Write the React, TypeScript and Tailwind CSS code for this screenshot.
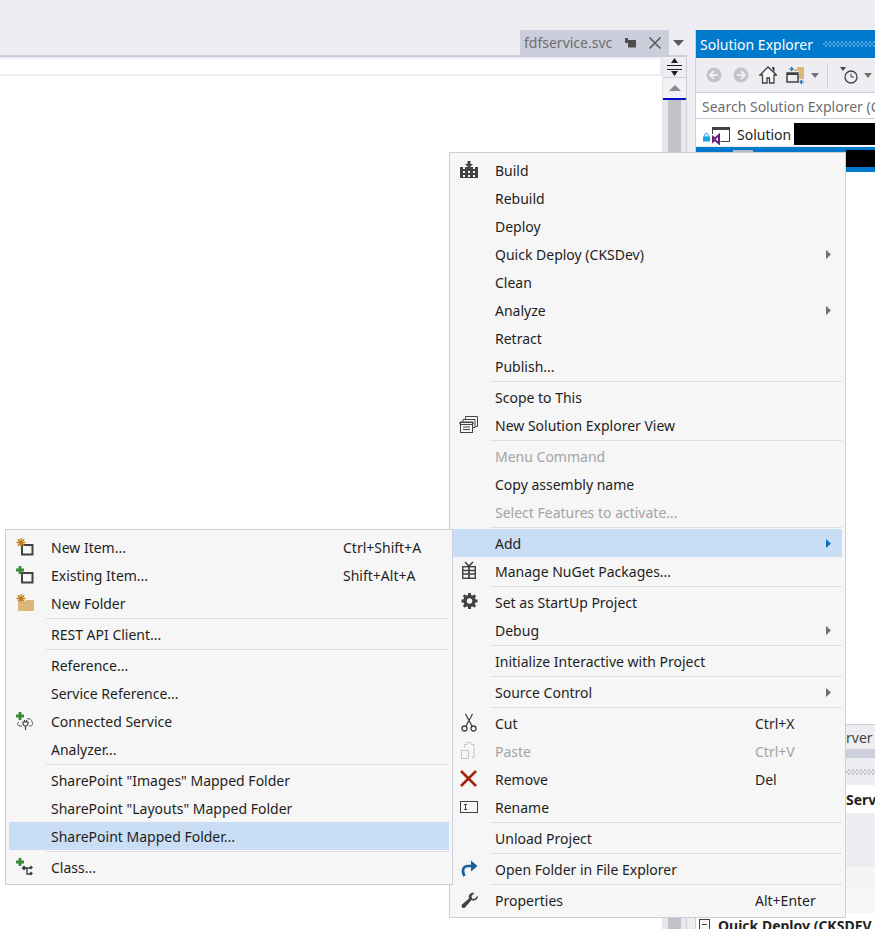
import React from 'react';

type Item = {
  label?: string;
  sep?: boolean;
  icon?: React.ReactNode;
  shortcut?: string;
  arrow?: boolean;
  disabled?: boolean;
  active?: boolean;
};

const Svg = ({ children, w = 20, h = 20 }: { children: React.ReactNode; w?: number; h?: number }) => (
  <svg width={w} height={h} viewBox={`0 0 ${w} ${h}`} fill="none">
    {children}
  </svg>
);

const NewStar = () => (
  <path d="M6 1v9M1.500 5.500h9M2.800 2.300l6.400 6.400M9.200 2.300l-6.400 6.400" stroke="#c27d1a" strokeWidth="1.300" />
);
const GreenPlus = () => <path d="M5 1v8M1 5h8" stroke="#388a34" strokeWidth="2.800" />;

const BoxIcon = ({ green }: { green?: boolean }) => (
  <Svg>
    <rect x="7" y="8" width="10.500" height="9.500" stroke="#424242" strokeWidth="2" />
    {green ? <GreenPlus /> : <NewStar />}
  </Svg>
);
const FolderIcon = () => (
  <Svg>
    <path d="M3 10l1-1h5l1.500-2H19v11H3z" fill="#dcb67a" />
    <NewStar />
  </Svg>
);
const ConnectedIcon = () => (
  <Svg>
    <path d="M4 11c-2 1-2 4 1 4h2M12 8c3-1 5 1 5 3 1 1 1 4-2 4h-1" stroke="#555" strokeWidth="1" />
    <path d="M8 11h5v2l-1.500 2h-2L8 13zM10.500 15v4M9.500 9v2M11.500 9v2" stroke="#424242" strokeWidth="1.200" />
    <GreenPlus />
  </Svg>
);
const ClassIcon = () => (
  <Svg>
    <path d="M9 11h7M12 11v6h4" stroke="#424242" strokeWidth="1.400" />
    <path d="M9 8.500l2.500 2.500L9 13.500 6.500 11zM16 8.500l2 2-2 2-2-2zM16 14.500l2 2-2 2-2-2z" fill="#424242" />
    <GreenPlus />
  </Svg>
);
const BuildIcon = () => (
  <Svg>
    <path d="M1 7h3v2h2V7h8v2h2V7h3v11H1z" fill="#424242" />
    <path d="M4 11h2v2H4zM9 11h2v2H9zM14 11h2v2h-2zM4 15h2v2H4zM9 15h2v2H9zM14 15h2v2h-2z" fill="#f6f6f6" />
    <path d="M8.500 1h3v3H14l-4 4-4-4h2.500z" fill="#424242" />
  </Svg>
);
const NewViewIcon = () => (
  <Svg>
    <path d="M6.500 4.500V1.500h12v10h-2" stroke="#424242" />
    <path d="M4 6.500V4.500h12v8h-2" stroke="#424242" />
    <rect x="1.500" y="7.500" width="12" height="10" fill="#f6f6f6" stroke="#424242" />
    <path d="M1 7h13v2.500H1zM4 12h7M4 14.500h7" stroke="#424242" />
  </Svg>
);
const GiftIcon = () => (
  <Svg>
    <path d="M6 1l4 4 4-4" stroke="#424242" strokeWidth="1.600" />
    <rect x="3.700" y="5.700" width="12.600" height="11.600" stroke="#424242" strokeWidth="1.400" />
    <path d="M3 9.500h14M3 13h14M10 5v13" stroke="#424242" strokeWidth="1.700" />
  </Svg>
);
const GearIcon = () => (
  <Svg>
    <circle cx="10.500" cy="9" r="4.500" stroke="#424242" strokeWidth="3.500" />
    <path d="M10.500 1v3M10.500 14v3M2.500 9h3M15.500 9h3M4.800 3.300l2 2M14.200 12.700l2 2M16.200 3.300l-2 2M6.800 12.700l-2 2" stroke="#424242" strokeWidth="3" />
  </Svg>
);
const CutIcon = () => (
  <Svg>
    <path d="M6.500 1l6.500 12M13.500 1L7 13" stroke="#424242" strokeWidth="1.300" />
    <circle cx="5.500" cy="15.500" r="2.500" stroke="#424242" strokeWidth="1.300" />
    <circle cx="14.500" cy="15.500" r="2.500" stroke="#424242" strokeWidth="1.300" />
  </Svg>
);
const PasteIcon = () => (
  <Svg>
    <path d="M5.500 6.500v-3h2.500V1.500h4v2h3v13H13" stroke="#c6c6c6" />
    <rect x="2.500" y="9.500" width="7" height="8" stroke="#c6c6c6" />
  </Svg>
);
const RemoveIcon = () => (
  <Svg>
    <path d="M2 2l15 15M17 2L2 17" stroke="#a1260d" strokeWidth="2.600" />
  </Svg>
);
const RenameIcon = () => (
  <Svg w={20} h={14}>
    <rect x="1.500" y="1.500" width="17" height="11" fill="#f6f6f6" stroke="#424242" />
    <path d="M5 4.500h3M5 9.500h3M6.500 4.500v5" stroke="#424242" />
  </Svg>
);
const OpenIcon = () => (
  <Svg>
    <path d="M17 7H9c-5 0-6.500 5-3.500 10" stroke="#1b5e9e" strokeWidth="2.600" />
    <path d="M12 1.500L18.500 7 12 12.500z" fill="#1b5e9e" />
  </Svg>
);
const WrenchIcon = () => (
  <Svg>
    <path d="M19 6c0 3.500-3.500 5.500-6.500 4L6 17.500c-1.500 1.500-4.500-.5-3-3L10 8.500C9 5 11.500 2 15.500 3L12.500 6l.5 2.500L15.500 9l3-3z" fill="#424242" />
  </Svg>
);

const mainItems: Item[] = [
  { label: 'Build', icon: <BuildIcon /> },
  { label: 'Rebuild' },
  { label: 'Deploy' },
  { label: 'Quick Deploy (CKSDev)', arrow: true },
  { label: 'Clean' },
  { label: 'Analyze', arrow: true },
  { label: 'Retract' },
  { label: 'Publish...' },
  { sep: true },
  { label: 'Scope to This' },
  { label: 'New Solution Explorer View', icon: <NewViewIcon /> },
  { sep: true },
  { label: 'Menu Command', disabled: true },
  { label: 'Copy assembly name' },
  { label: 'Select Features to activate...', disabled: true },
  { sep: true },
  { label: 'Add', arrow: true, active: true },
  { label: 'Manage NuGet Packages...', icon: <GiftIcon /> },
  { sep: true },
  { label: 'Set as StartUp Project', icon: <GearIcon /> },
  { label: 'Debug', arrow: true },
  { sep: true },
  { label: 'Initialize Interactive with Project' },
  { sep: true },
  { label: 'Source Control', arrow: true },
  { sep: true },
  { label: 'Cut', icon: <CutIcon />, shortcut: 'Ctrl+X' },
  { label: 'Paste', icon: <PasteIcon />, shortcut: 'Ctrl+V', disabled: true },
  { label: 'Remove', icon: <RemoveIcon />, shortcut: 'Del' },
  { label: 'Rename', icon: <RenameIcon /> },
  { sep: true },
  { label: 'Unload Project' },
  { sep: true },
  { label: 'Open Folder in File Explorer', icon: <OpenIcon /> },
  { sep: true },
  { label: 'Properties', icon: <WrenchIcon />, shortcut: 'Alt+Enter' },
];

const addItems: Item[] = [
  { label: 'New Item...', icon: <BoxIcon />, shortcut: 'Ctrl+Shift+A' },
  { label: 'Existing Item...', icon: <BoxIcon green />, shortcut: 'Shift+Alt+A' },
  { label: 'New Folder', icon: <FolderIcon /> },
  { sep: true },
  { label: 'REST API Client...' },
  { sep: true },
  { label: 'Reference...' },
  { label: 'Service Reference...' },
  { label: 'Connected Service', icon: <ConnectedIcon /> },
  { label: 'Analyzer...' },
  { sep: true },
  { label: 'SharePoint "Images" Mapped Folder' },
  { label: 'SharePoint "Layouts" Mapped Folder' },
  { label: 'SharePoint Mapped Folder...', active: true },
  { sep: true },
  { label: 'Class...', icon: <ClassIcon /> },
];

function Menu({ items, className, shortcutWidth }: { items: Item[]; className: string; shortcutWidth: string }) {
  return (
    <div className={`absolute border border-[#cccedb] bg-[#f6f6f6] p-[3px] ${className}`}>
      {items.map((item, i) =>
        item.sep ? (
          <div key={i} className="h-[3px] flex items-center pl-[37px]">
            <div className="h-px w-full bg-[#dedee2]" />
          </div>
        ) : (
          <div
            key={i}
            className={`h-7 flex items-center ${item.active ? 'bg-[#c9def5]' : ''} ${item.disabled ? 'text-[#a2a4a5]' : 'text-[#1e1e1e]'}`}
          >
            <div className="w-[42px] shrink-0 flex pl-[6px]">{item.icon}</div>
            <div className="flex-1 whitespace-nowrap">{item.label}</div>
            <div className={`${shortcutWidth} shrink-0 flex justify-end whitespace-nowrap`}>
              {item.shortcut ? <span className="w-full">{item.shortcut}</span> : null}
              {item.arrow ? (
                <svg width="7" height="9" viewBox="0 0 7 9" className="mr-[10px]">
                  <path d="M1 0l5 4.500L1 9z" fill={item.active ? '#0e70c0' : '#717171'} />
                </svg>
              ) : null}
            </div>
          </div>
        ),
      )}
    </div>
  );
}

function Tab() {
  return (
    <div className="h-[55px] flex items-end justify-end pr-[8px]">
      <div className="h-[25px] w-[149px] bg-[#cccedb] flex items-center pl-[4px] text-[#6d6d70]">
        <span className="flex-1">fdfservice.svc</span>
        <svg width="14" height="12" viewBox="0 0 14 12" className="mr-[10px]">
          <path d="M1 1h3v2h8v6H4V6H1zM4 9h8v1.500H4z" fill="#4d4d50" />
        </svg>
        <svg width="14" height="14" viewBox="0 0 14 14" className="mr-[7px]">
          <path d="M1.500 1.500l11 11M12.500 1.500l-11 11" stroke="#5a5a5e" strokeWidth="1.600" />
        </svg>
      </div>
      <div className="h-[25px] w-[18px] flex items-center justify-center">
        <svg width="11" height="6" viewBox="0 0 11 6">
          <path d="M0 0h11L5.500 6z" fill="#5a5a5e" />
        </svg>
      </div>
    </div>
  );
}

function EditorScrollbar() {
  return (
    <div className="w-[24px] flex flex-col bg-[#e8e8ec] border-l border-[#e4e4e8]">
      <div className="h-[21px] flex items-center justify-center bg-[#eeeef2] border-b border-[#d0d1da]">
        <svg width="15" height="18" viewBox="0 0 15 18">
          <path d="M0 7.500h15M0 11.500h15" stroke="#1e1e1e" strokeWidth="1.200" />
          <path d="M7.500 0L11 5H4zM7.500 18L4 13h7z" fill="#1e1e1e" />
        </svg>
      </div>
      <div className="h-[20px] flex items-center justify-center bg-[#f2f2f5]">
        <svg width="12" height="6" viewBox="0 0 12 6">
          <path d="M6 0l6 6H0z" fill="#8b8c92" />
        </svg>
      </div>
      <div className="h-[2px] bg-[#0a0ad0]" />
      <div className="flex-1 mx-[5px] bg-[#c2c3c9]" />
    </div>
  );
}

function ToolbarIcons() {
  return (
    <div className="h-[34px] flex items-center bg-[#eeeef2] pl-[10px]">
      <svg width="16" height="16" viewBox="0 0 16 16" className="mr-[11px]">
        <circle cx="8" cy="8" r="7.500" fill="#c4c4c6" />
        <path d="M8 4L4 8l4 4M4.500 8H12" stroke="#eeeef2" strokeWidth="2" fill="none" />
      </svg>
      <svg width="16" height="16" viewBox="0 0 16 16" className="mr-[10px]">
        <circle cx="8" cy="8" r="7.500" fill="#c4c4c6" />
        <path d="M8 4l4 4-4 4M11.500 8H4" stroke="#eeeef2" strokeWidth="2" fill="none" />
      </svg>
      <svg width="18" height="18" viewBox="0 0 18 18" className="mr-[9px]">
        <path d="M9 1L1 9h2.500v8H8v-5h2.500v5h4.500V9h2.500z" fill="#f6f6f6" stroke="#424242" strokeWidth="1.300" />
        <path d="M13 1.500h2v4" stroke="#424242" />
      </svg>
      <svg width="20" height="19" viewBox="0 0 20 19" className="mr-[5px]">
        <path d="M8 3h3V1h7v12h-5V5H8z" fill="#dcb67a" />
        <rect x="1" y="7" width="11" height="9" fill="#eeeef2" stroke="#424242" strokeWidth="1.500" />
        <path d="M1 8h11" stroke="#424242" strokeWidth="2" />
        <path d="M3 3h4M5 1l2 2-2 2M18 16h-3M16 14l-2 2 2 2" stroke="#1b6fc2" strokeWidth="1.200" fill="none" />
      </svg>
      <svg width="8" height="5" viewBox="0 0 8 5" className="mr-[8px]">
        <path d="M0 0h8L4 5z" fill="#717171" />
      </svg>
      <div className="w-px h-[24px] bg-[#ccced6] mr-[11px]" />
      <svg width="20" height="19" viewBox="0 0 20 19" className="mr-[5px]">
        <circle cx="12" cy="11" r="6" fill="none" stroke="#424242" strokeWidth="1.300" />
        <path d="M12 7.500V11h3" stroke="#424242" fill="none" />
        <path d="M1 1h6L4 5z" fill="#424242" />
      </svg>
      <svg width="8" height="5" viewBox="0 0 8 5">
        <path d="M0 0h8L4 5z" fill="#717171" />
      </svg>
    </div>
  );
}

function SolutionExplorer() {
  return (
    <div className="w-[180px] shrink-0 pt-[30px]">
      <div className="h-full flex flex-col overflow-hidden border-l border-[#cccedb]">
        <div className="h-[28px] bg-[#007acc] flex items-center pl-[4px] text-white whitespace-nowrap">
          <span>Solution Explorer</span>
          <div className="flex-1 h-[6px] ml-[10px] bg-[repeating-conic-gradient(#4fa2dc_0_25%,#007acc_0_50%)] bg-[length:4px_4px]" />
        </div>
        <ToolbarIcons />
        <div className="h-[27px] bg-white border-y border-[#cccedb] flex items-center pl-[6px] pt-px text-[#6d6d70] whitespace-nowrap overflow-hidden">
          Search Solution Explorer (C
        </div>
        <div className="h-[3px] bg-white" />
        <div className="h-[24px] bg-white flex items-center pl-[6px] text-[#1e1e1e] whitespace-nowrap">
          <svg width="30" height="22" viewBox="0 0 30 22" className="mr-[5px] shrink-0">
            <path d="M2.800 14v-2a1.700 1.700 0 013.400 0v2" stroke="#1ba1e2" fill="none" />
            <rect x="1" y="13.500" width="7" height="5" fill="#1ba1e2" />
            <path d="M10.500 11V4.500h17v14h-9" stroke="#424242" fill="none" />
            <path d="M10 5.500h18" stroke="#424242" strokeWidth="3" />
            <path d="M11 14l2 1.500 4-3.500v8.500l-4-3.500-2 1.500z" fill="none" stroke="#68217a" strokeWidth="2" />
          </svg>
          <span>Solution</span>
          <div className="flex-1 h-[22px] ml-[3px] bg-black" />
        </div>
        <div className="h-[25px] mt-px bg-[#007acc] flex justify-between items-start pt-[3px] pl-[37px]">
          <div className="w-[20px] h-[5px] bg-[#b8bcc4]" />
          <div className="w-[29px] h-[17px] bg-black" />
        </div>
        <div className="flex-1 bg-white" />
        <div className="h-[25px] border-t border-[#cccedb] bg-[#eeeef2] flex items-center text-[#444] whitespace-nowrap pl-[150px] overflow-hidden">
          rver
        </div>
        <div className="h-[9px] bg-[#cccedb]" />
        <div className="h-[27px] bg-[#eeeef2] flex items-center justify-end">
          <div className="w-[29px] h-[6px] bg-[repeating-conic-gradient(#c4c5cc_0_25%,#eeeef2_0_50%)] bg-[length:4px_4px]" />
        </div>
        <div className="h-[28px] bg-white flex items-center justify-end overflow-hidden">
          <span className="font-bold text-[#1e1e1e] w-[29px]">Serv</span>
        </div>
        <div className="h-[54px] bg-[#eeeef2]" />
        <div className="h-[23px] bg-[#f5f5f5]" />
        <div className="h-[23px] bg-[#f7f7f9]" />
        <div className="h-[16px] bg-white flex items-start pt-[2px] pl-[3px] whitespace-nowrap font-bold text-[#1e1e1e] overflow-hidden">
          <svg width="11" height="11" viewBox="0 0 11 11" className="mr-[8px] mt-[4px] shrink-0">
            <rect x="0.500" y="0.500" width="10" height="10" fill="#f6f6f6" stroke="#424242" />
            <path d="M3 5.500h5" stroke="#424242" />
          </svg>
          Quick Deploy (CKSDEV
        </div>
      </div>
    </div>
  );
}

export default function App() {
  return (
    <div className="relative h-[929px] w-[875px] overflow-hidden bg-[#eeeef2] flex font-['Noto_Sans',sans-serif] text-[14px]">
      <div className="flex-1 flex flex-col min-w-0">
        <Tab />
        <div className="h-[2px] bg-[#cccedb] mr-[8px]" />
        <div className="flex-1 flex mr-[8px] border-r border-[#cccedb] bg-white">
          <div className="flex-1 flex flex-col">
            <div className="h-[19px] bg-[#eeeef2] pt-[2px] pr-[2px]">
              <div className="h-[15px] bg-white" />
            </div>
          </div>
          <EditorScrollbar />
        </div>
      </div>
      <SolutionExplorer />
      <Menu items={mainItems} className="left-[449px] top-[152px] w-[397px] z-10" shortcutWidth="w-[87px]" />
      <Menu items={addItems} className="left-[5px] top-[529px] w-[448px] z-20" shortcutWidth="w-[106px]" />
    </div>
  );
}
